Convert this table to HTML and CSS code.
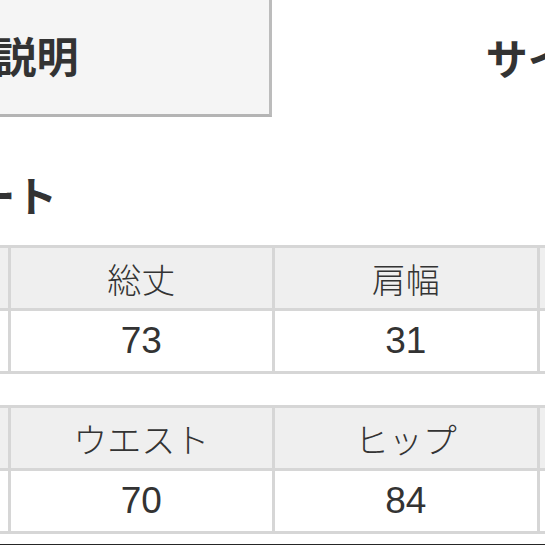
FILE: index.html
```html
<!DOCTYPE html>
<html lang="ja">
<head>
<meta charset="utf-8">
<link rel="stylesheet" href="styles.css">
</head>
<body>
<div class="page">
  <div class="tabs">
    <div class="tab tab-active">商品説明</div>
    <div class="tab">サイズ</div>
  </div>
  <h2 class="heading">サイズチャート</h2>
  <div class="chart">
    <div class="cell head">サイズ</div>
    <div class="cell head">総丈</div>
    <div class="cell head">肩幅</div>
    <div class="cell head">身幅</div>
    <div class="cell num">M</div>
    <div class="cell num">73</div>
    <div class="cell num">31</div>
    <div class="cell num">40</div>
  </div>
  <div class="chart chart-second">
    <div class="cell head">バスト</div>
    <div class="cell head">ウエスト</div>
    <div class="cell head">ヒップ</div>
    <div class="cell head">袖丈</div>
    <div class="cell num">82</div>
    <div class="cell num">70</div>
    <div class="cell num">84</div>
    <div class="cell num">20</div>
  </div>
  <div class="rule"></div>
</div>
</body>
</html>
```

FILE: styles.css
```css
html, body {
  margin: 0;
  padding: 0;
  background: #ffffff;
  overflow: hidden;
}

body {
  width: 545px;
  height: 545px;
  font-family: "Noto Sans CJK JP", "Noto Sans", sans-serif;
  color: #333333;
}

.page {
  width: 1400px;
  margin-left: -280px;
}

.tabs {
  display: flex;
  height: 117px;
}

.tab {
  width: 552px;
  box-sizing: border-box;
  display: flex;
  align-items: center;
  justify-content: center;
  font-size: 42px;
  font-weight: 700;
  color: #333333;
  padding-bottom: 5px;
}

.tab-active {
  background: #f5f5f5;
  border-right: 3px solid #bcbcbc;
  border-bottom: 3px solid #b4b4b4;
}

.heading {
  margin: 56px 0 0 0;
  padding-left: 45px;
  font-size: 42px;
  line-height: 42px;
  font-weight: 700;
  color: #333333;
}

.chart {
  display: grid;
  grid-template-columns: repeat(4, 261.5px);
  grid-auto-rows: 60px;
  gap: 3px;
  background: #d6d6d6;
  border: 3px solid #d6d6d6;
  margin: 30px 0 0 23px;
  width: max-content;
}

.chart-second {
  margin-top: 31px;
}

.cell {
  background: #ffffff;
  display: flex;
  align-items: center;
  justify-content: center;
  font-size: 34px;
  font-weight: 300;
  color: #333333;
}

.cell.head {
  background: #efefef;
}

.cell.num {
  font-family: "Liberation Sans", "Noto Sans CJK JP", sans-serif;
  font-size: 37px;
  font-weight: 400;
}

.rule {
  margin-top: 10px;
  height: 3px;
  background: #262626;
}
```
